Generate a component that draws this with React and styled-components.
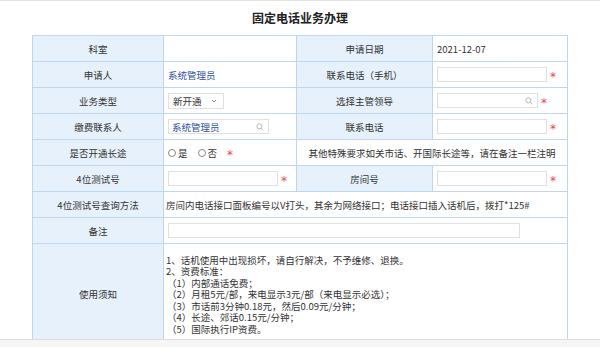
import React from "react";
import styled, { createGlobalStyle } from "styled-components";

const Global = createGlobalStyle`
  html, body { margin: 0; padding: 0; background: #f6f6f6; }
  body { font-family: "Noto Sans CJK SC", "Noto Sans", sans-serif; color: #333; }
`;

const Page = styled.div`
  height: 340px;
  overflow: hidden;
  background: #fff;
  border-top: 1px solid #e4e4e4;
  border-bottom: 1px solid #dcdcdc;
  box-sizing: border-box;
`;

const Title = styled.h1`
  margin: 0;
  height: 34px;
  line-height: 34px;
  text-align: center;
  font-size: 12px;
  font-weight: bold;
  color: #222;
`;

const Table = styled.table`
  margin: 0 auto;
  width: 535px;
  table-layout: fixed;
  border-collapse: collapse;
  font-size: 9.5px;
`;

const Label = styled.td`
  background: #e7f1fb;
  border: 1px solid #bed7ee;
  text-align: center;
  height: ${(p) => p.$h || 25}px;
  padding: 0;
  color: #333;
`;

const Value = styled.td`
  background: #fff;
  border: 1px solid #bed7ee;
  height: ${(p) => p.$h || 25}px;
  padding: 0 0 0 ${(p) => p.$pl ?? 4}px;
  text-align: ${(p) => (p.$center ? "center" : "left")};
  vertical-align: ${(p) => p.$valign || "middle"};
  color: #333;
`;

const Cell = styled.div`
  display: flex;
  align-items: center;
  gap: 3px;
`;

const Input = styled.div`
  width: ${(p) => p.$w}px;
  height: 15px;
  border: 1px solid #e0e0e0;
  background: #fff;
  box-sizing: border-box;
  display: flex;
  align-items: center;
  justify-content: space-between;
  padding: 0 4px 0 3px;
  color: #2e4f9e;
`;

const Star = styled.span`
  color: #e8454a;
  font-family: "DejaVu Sans", sans-serif;
  font-size: 12px;
  line-height: 1;
  margin-top: 5px;
`;

const Select = styled.div`
  width: 56px;
  height: 16px;
  border: 1px solid #e0e0e0;
  box-sizing: border-box;
  display: flex;
  align-items: center;
  justify-content: space-between;
  padding: 0 6px 0 4px;
  margin-left: 1px;
`;

const Blue = styled.span`
  color: #2e4f9e;
`;

const Radio = styled.span`
  display: inline-flex;
  align-items: center;
  gap: 2px;
  margin-right: 7px;
`;

const Circle = styled.span`
  width: 8px;
  height: 8px;
  border: 1px solid #888;
  border-radius: 50%;
  box-sizing: border-box;
  display: inline-block;
`;

const Notes = styled.div`
  line-height: 11.5px;
  padding: 2px 0 0;
`;

const Line = styled.div`
  height: 11.5px;
  padding-left: ${(p) => (p.$indent ? 1 : 0)}px;
  white-space: nowrap;
`;

const SearchIcon = () => (
  <svg width="8" height="8" viewBox="0 0 10 10" fill="none" stroke="#aaa" strokeWidth="1">
    <circle cx="4.2" cy="4.2" r="3.2" />
    <path d="M6.6 6.6 L9.2 9.2" />
  </svg>
);

const Caret = () => (
  <svg width="6" height="4" viewBox="0 0 6 4" fill="none" stroke="#777" strokeWidth="0.9">
    <path d="M1 1 L3 3 L5 1" />
  </svg>
);

export default function App() {
  return (
    <>
      <Global />
      <Page>
        <Title>固定电话业务办理</Title>
        <Table>
          <colgroup>
            <col style={{ width: 131 }} />
            <col style={{ width: 133 }} />
            <col style={{ width: 136 }} />
            <col style={{ width: 135 }} />
          </colgroup>
          <tbody>
            <tr>
              <Label>科室</Label>
              <Value />
              <Label>申请日期</Label>
              <Value>2021-12-07</Value>
            </tr>
            <tr>
              <Label>申请人</Label>
              <Value><Blue>系统管理员</Blue></Value>
              <Label>联系电话（手机）</Label>
              <Value>
                <Cell><Input $w={110} /><Star>*</Star></Cell>
              </Value>
            </tr>
            <tr>
              <Label>业务类型</Label>
              <Value $pl={3}>
                <Select><span>新开通</span><Caret /></Select>
              </Value>
              <Label>选择主管领导</Label>
              <Value>
                <Cell><Input $w={101}><span /><SearchIcon /></Input><Star>*</Star></Cell>
              </Value>
            </tr>
            <tr>
              <Label>缴费联系人</Label>
              <Value>
                <Cell><Input $w={101}><span>系统管理员</span><SearchIcon /></Input></Cell>
              </Value>
              <Label>联系电话</Label>
              <Value>
                <Cell><Input $w={110} /><Star>*</Star></Cell>
              </Value>
            </tr>
            <tr>
              <Label>是否开通长途</Label>
              <Value>
                <Cell>
                  <Radio><Circle />是</Radio>
                  <Radio><Circle />否</Radio>
                  <Star>*</Star>
                </Cell>
              </Value>
              <Value colSpan={2} $center $pl={0}>其他特殊要求如关市话、开国际长途等，请在备注一栏注明</Value>
            </tr>
            <tr>
              <Label>4位测试号</Label>
              <Value>
                <Cell><Input $w={110} /><Star>*</Star></Cell>
              </Value>
              <Label>房间号</Label>
              <Value>
                <Cell><Input $w={110} /><Star>*</Star></Cell>
              </Value>
            </tr>
            <tr>
              <Label>4位测试号查询方法</Label>
              <Value colSpan={3} $pl={2}>房间内电话接口面板编号以V打头，其余为网络接口；电话接口插入话机后，拨打*125#</Value>
            </tr>
            <tr>
              <Label>备注</Label>
              <Value colSpan={3}>
                <Cell><Input $w={352} /></Cell>
              </Value>
            </tr>
            <tr>
              <Label $h={100}>使用须知</Label>
              <Value colSpan={3} $h={100} $pl={2}>
                <Notes>
                  <Line>1、话机使用中出现损坏，请自行解决，不予维修、退换。</Line>
                  <Line>2、资费标准：</Line>
                  <Line $indent>（1）内部通话免费；</Line>
                  <Line $indent>（2）月租5元/部，来电显示3元/部（来电显示必选）；</Line>
                  <Line $indent>（3）市话前3分钟0.18元，然后0.09元/分钟；</Line>
                  <Line $indent>（4）长途、郊话0.15元/分钟；</Line>
                  <Line $indent>（5）国际执行IP资费。</Line>
                </Notes>
              </Value>
            </tr>
          </tbody>
        </Table>
      </Page>
    </>
  );
}
